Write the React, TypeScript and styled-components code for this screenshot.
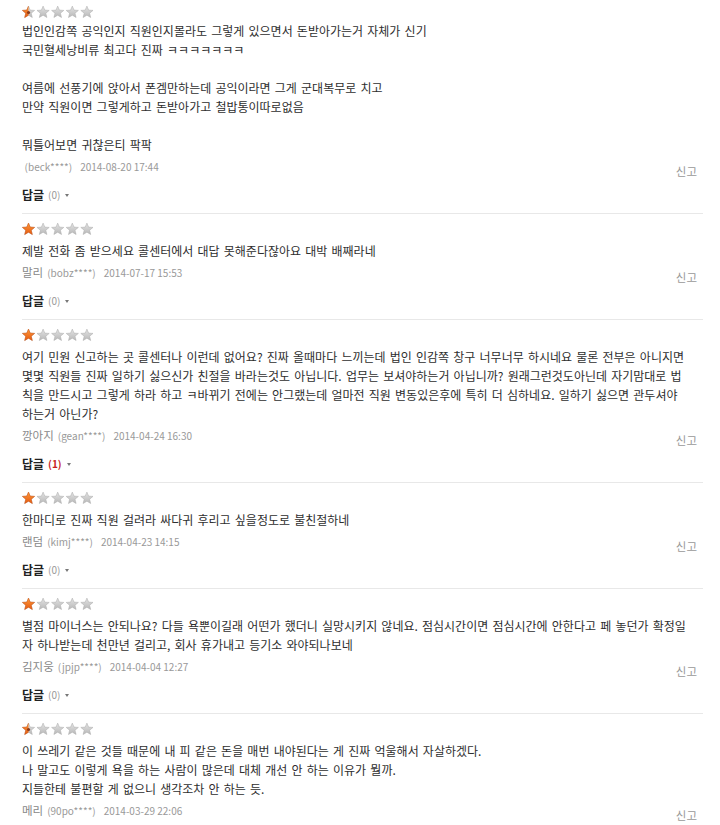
import styled, { createGlobalStyle } from "styled-components";

const GlobalStyle = createGlobalStyle`
  html, body {
    margin: 0;
    padding: 0;
    background: #ffffff;
  }
  body {
    font-family: "Noto Sans CJK KR", "Noto Sans", sans-serif;
  }
`;

const Container = styled.div`
  margin: 0 17px 0 22px;
`;

const List = styled.ul`
  list-style: none;
  margin: 0;
  padding: 0;
`;

const Item = styled.li<{ $first?: boolean }>`
  padding: ${(p) => (p.$first ? "5px" : "8px")} 0 9px 0;
  border-bottom: 1px solid #e8e8e8;
`;

const Stars = styled.div<{ $tight?: boolean }>`
  height: 14px;
  margin-bottom: ${(p) => (p.$tight ? "2px" : "5px")};
  svg {
    display: block;
  }
`;

const Body = styled.div`
  font-size: 12px;
  line-height: 19px;
  color: #2e2e2e;
  word-spacing: 1.5px;
  white-space: pre;
  overflow: hidden;
`;

const Line = styled.div`
  min-height: 19px;
`;

const MetaRow = styled.div`
  display: flex;
  align-items: flex-start;
  justify-content: space-between;
  margin-top: 3px;
  height: 19px;
`;

const Writer = styled.div`
  display: flex;
  align-items: baseline;
  line-height: 19px;
  color: #999;
`;

const Nick = styled.span<{ $empty?: boolean }>`
  font-size: 11.5px;
  color: #888;
  margin-right: ${(p) => (p.$empty ? "0" : "4px")};
`;

const UserId = styled.span`
  font-size: 10px;
  color: #999;
  margin-right: 8px;
`;

const DateText = styled.span`
  font-size: 10px;
  color: #999;
`;

const Report = styled.a`
  font-size: 11.5px;
  color: #999;
  line-height: 19px;
  margin-top: 5px;
  margin-right: 6px;
`;

const ReplyRow = styled.div`
  margin-top: 9px;
  height: 19px;
  display: flex;
  align-items: center;
`;

const ReplyLabel = styled.span`
  font-size: 12px;
  font-weight: bold;
  color: #222;
  margin-right: 4px;
`;

const ReplyCount = styled.span<{ $active: boolean }>`
  font-size: 10px;
  color: ${(p) => (p.$active ? "#c81e1e" : "#999")};
  font-weight: ${(p) => (p.$active ? "bold" : "normal")};
  margin-right: 5px;
`;

const Caret = styled.span`
  display: inline-block;
  width: 0;
  height: 0;
  border-left: 2.5px solid transparent;
  border-right: 2.5px solid transparent;
  border-top: 3px solid #777;
  margin-top: 2px;
`;

const STAR =
  "M6.5 0.6 L8.2 4.6 L12.6 4.9 L9.2 7.7 L10.3 12 L6.5 9.7 L2.7 12 L3.8 7.7 L0.4 4.9 L4.8 4.6 Z";

function StarRating({ half }: { half?: boolean }) {
  return (
    <svg width="76" height="14" viewBox="0 0 76 14">
      <defs>
        <linearGradient id="gray" x1="0" y1="0" x2="0" y2="1">
          <stop offset="0" stopColor="#e4e4e4" />
          <stop offset="1" stopColor="#b8b8b8" />
        </linearGradient>
        <linearGradient id="orange" x1="0" y1="0" x2="0" y2="1">
          <stop offset="0" stopColor="#ff9a3c" />
          <stop offset="1" stopColor="#e45a10" />
        </linearGradient>
        <clipPath id="halfClip">
          <rect x="0" y="0" width="6.5" height="14" />
        </clipPath>
      </defs>
      {[0, 1, 2, 3, 4].map((i) => (
        <g key={i} transform={`translate(${i * 14.6} 0.5)`}>
          <path d={STAR} fill="url(#gray)" stroke="#aaaaaa" strokeWidth="0.5" />
          {i === 0 && (
            <path
              d={STAR}
              fill="url(#orange)"
              stroke="#d25410"
              strokeWidth="0.5"
              clipPath={half ? "url(#halfClip)" : undefined}
            />
          )}
          {i === 0 && half && <circle cx="6.5" cy="7" r="1.6" fill="#8a3a1a" />}
        </g>
      ))}
    </svg>
  );
}

interface IReview {
  half?: boolean;
  lines: string[];
  nick: string;
  id: string;
  date: string;
  replies: number;
}

const reviews: IReview[] = [
  {
    half: true,
    lines: [
      "법인인감쪽 공익인지 직원인지몰라도 그렇게 있으면서 돈받아가는거 자체가 신기",
      "국민혈세낭비류 최고다 진짜 ㅋㅋㅋㅋㅋㅋㅋ",
      "",
      "여름에 선풍기에 앉아서 폰겜만하는데 공익이라면 그게 군대복무로 치고",
      "만약 직원이면 그렇게하고 돈받아가고 철밥통이따로없음",
      "",
      "뭐틀어보면 귀찮은티 팍팍",
    ],
    nick: "",
    id: "(beck****)",
    date: "2014-08-20 17:44",
    replies: 0,
  },
  {
    lines: ["제발 전화 좀 받으세요 콜센터에서 대답 못해준다잖아요 대박 배째라네"],
    nick: "말리",
    id: "(bobz****)",
    date: "2014-07-17 15:53",
    replies: 0,
  },
  {
    lines: [
      "여기 민원 신고하는 곳 콜센터나 이런데 없어요? 진짜 올때마다 느끼는데 법인 인감쪽 창구 너무너무 하시네요 물론 전부은 아니지면",
      "몇몇 직원들 진짜 일하기 싫으신가 친절을 바라는것도 아닙니다. 업무는 보셔야하는거 아닙니까? 원래그런것도아닌데 자기맘대로 법",
      "칙을 만드시고 그렇게 하라 하고 ㅋ바뀌기 전에는 안그랬는데 얼마전 직원 변동있은후에 특히 더 심하네요. 일하기 싫으면 관두셔야",
      "하는거 아닌가?",
    ],
    nick: "깡아지",
    id: "(gean****)",
    date: "2014-04-24 16:30",
    replies: 1,
  },
  {
    lines: ["한마디로 진짜 직원 걸려라 싸다귀 후리고 싶을정도로 불친절하네"],
    nick: "랜덤",
    id: "(kimj****)",
    date: "2014-04-23 14:15",
    replies: 0,
  },
  {
    lines: [
      "별점 마이너스는 안되나요? 다들 욕뿐이길래 어떤가 했더니 실망시키지 않네요. 점심시간이면 점심시간에 안한다고 페 놓던가 확정일",
      "자 하나받는데 천만년 걸리고, 회사 휴가내고 등기소 와야되나보네",
    ],
    nick: "김지웅",
    id: "(jpjp****)",
    date: "2014-04-04 12:27",
    replies: 0,
  },
  {
    half: true,
    lines: [
      "이 쓰레기 같은 것들 때문에 내 피 같은 돈을 매번 내야된다는 게 진짜 억울해서 자살하겠다.",
      "나 말고도 이렇게 욕을 하는 사람이 많은데 대체 개선 안 하는 이유가 뭘까.",
      "지들한테 불편할 게 없으니 생각조차 안 하는 듯.",
    ],
    nick: "메리",
    id: "(90po****)",
    date: "2014-03-29 22:06",
    replies: 0,
  },
];

function App() {
  return (
    <>
      <GlobalStyle />
      <Container>
        <List>
          {reviews.map((r, idx) => (
            <Item key={idx} $first={idx === 0}>
              <Stars $tight={idx === 0}>
                <StarRating half={r.half} />
              </Stars>
              <Body>
                {r.lines.map((l, i) => (
                  <Line key={i}>{l}</Line>
                ))}
              </Body>
              <MetaRow>
                <Writer>
                  <Nick $empty={!r.nick}>{r.nick || "\u00a0"}</Nick>
                  <UserId>{r.id}</UserId>
                  <DateText>{r.date}</DateText>
                </Writer>
                <Report>신고</Report>
              </MetaRow>
              <ReplyRow>
                <ReplyLabel>답글</ReplyLabel>
                <ReplyCount $active={r.replies > 0}>({r.replies})</ReplyCount>
                <Caret />
              </ReplyRow>
            </Item>
          ))}
        </List>
      </Container>
    </>
  );
}

export default App;
